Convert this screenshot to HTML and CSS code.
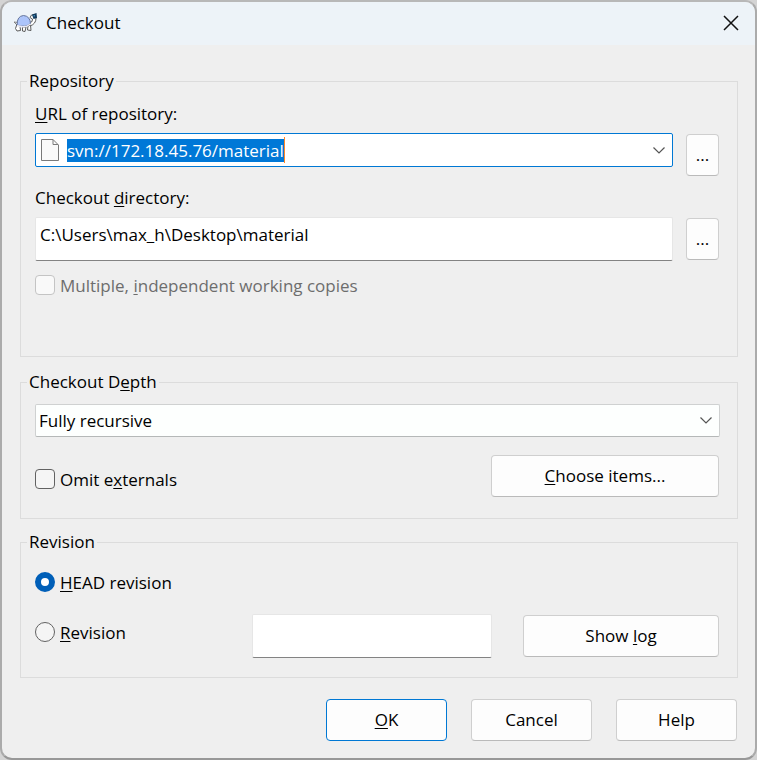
FILE: index.html
```html
<!DOCTYPE html>
<html lang="en">
<head>
<meta charset="utf-8">
<title>Checkout</title>
<link rel="stylesheet" href="styles.css">
</head>
<body>
<form class="window">
  <header class="titlebar">
    <svg class="app-icon" viewBox="0 0 24 20" aria-hidden="true">
      <path d="M1 9 L5 9.500 L4 12 Z" fill="#fff" stroke="#777" stroke-width=".9"/>
      <path d="M4 11 L2.500 15.500 L4 18 L7.500 17.500 L7 13 Z M9.500 14 L9.500 18 L12 18.500 L13 14 Z M15 13 L14.500 17 L18 17.500 L17.500 12 Z" fill="#fff" stroke="#5c5c5c"/>
      <path d="M16.500 9.500 Q20 9.500 19.500 6 L17 4.500 L18.500 2 L22.500 2 L23 5 Q23 11 17 13 Z" fill="#fff" stroke="#5c5c5c"/>
      <path d="M4 12 Q4 3 10.500 2.500 Q17 3 17.500 10.500 Q12 15 4 12 Z" fill="#acc4fa" stroke="#63749c"/>
      <path d="M4 12.500 Q12 15.500 17.500 11" fill="none" stroke="#e8e8f2" stroke-width="1.500"/>
      <path d="M19 1.500 L23.500 0 L24 5 L20.500 6 Z" fill="#123a5c"/>
      <path d="M20.500 2 h1.500 v1.500 h-1.500 Z" fill="#3b86b5"/>
    </svg>
    <h1 class="title">Checkout</h1>
    <button class="close" type="button" aria-label="Close">
      <svg viewBox="0 0 16 16" width="16" height="16"><path d="M1 1 L15 15 M15 1 L1 15" fill="none" stroke="#111" stroke-width="1.500"/></svg>
    </button>
  </header>

  <main class="content">
    <fieldset class="group group-repository">
      <legend>Repository</legend>
      <label class="field-label" for="url"><u>U</u>RL of repository:</label>
      <div class="field-row">
        <div class="combo combo-url">
          <svg class="file-icon" viewBox="0 0 18 22" width="18" height="22" aria-hidden="true">
            <path d="M.5 .5 H12 L17.500 6 V21.500 H.5 Z" fill="#fafafa" stroke="#7a7a7a"/>
            <path d="M12 .5 V5.500 H17" fill="none" stroke="#7a7a7a"/>
          </svg>
          <input class="url-input" id="url" type="text" value="svn://172.18.45.76/material" autocomplete="off" spellcheck="false">
          <button class="drop" type="button" aria-label="Show recent URLs">
            <svg viewBox="0 0 12 7" width="12" height="7"><path d="M.5 .5 L6 6 L11.500 .5" fill="none" stroke="#555" stroke-width="1.200"/></svg>
          </button>
        </div>
        <button class="btn browse" type="button" aria-label="Browse repository">...</button>
      </div>
      <label class="field-label" for="directory">Checkout <u>d</u>irectory:</label>
      <div class="field-row">
        <input class="text-input" id="directory" type="text" value="C:\Users\max_h\Desktop\material" spellcheck="false">
        <button class="btn browse" type="button" aria-label="Browse directory">...</button>
      </div>
      <label class="option option-disabled"><input type="checkbox" disabled><span>Multiple, <u>i</u>ndependent working copies</span></label>
    </fieldset>

    <fieldset class="group group-depth">
      <legend>Checkout D<u>e</u>pth</legend>
      <div class="combo">
        <select class="depth" aria-label="Checkout Depth"><option>Fully recursive</option></select>
        <svg class="select-arrow" viewBox="0 0 12 7" width="12" height="7" aria-hidden="true"><path d="M.5 .5 L6 6 L11.500 .5" fill="none" stroke="#555" stroke-width="1.200"/></svg>
      </div>
      <div class="option-row depth-row">
        <label class="option"><input type="checkbox"><span>Omit e<u>x</u>ternals</span></label>
        <button class="btn choose" type="button"><u>C</u>hoose items...</button>
      </div>
    </fieldset>

    <fieldset class="group group-revision">
      <legend>Revision</legend>
      <label class="option head"><input type="radio" name="rev" checked><span><u>H</u>EAD revision</span></label>
      <div class="option-row revision-row">
        <label class="option"><input type="radio" name="rev"><span><u>R</u>evision</span></label>
        <input class="text-input revision-input" type="text" aria-label="Revision number">
        <button class="btn log" type="button">Show <u>l</u>og</button>
      </div>
    </fieldset>

    <footer class="actions">
      <button class="btn btn-default" type="button"><u>O</u>K</button>
      <button class="btn" type="button">Cancel</button>
      <button class="btn" type="button">Help</button>
    </footer>
  </main>
</form>
<script src="script.js"></script>
</body>
</html>
```
FILE: styles.css
```css
* {
  box-sizing: border-box;
}

body {
  margin: 0;
  background: #d4d4d4;
  color: #000;
  font: 17px/24px "Open Sans", "Noto Sans", sans-serif;
}

input,
button,
select {
  margin: 0;
  color: inherit;
  font: inherit;
}

u {
  text-decoration-thickness: 1px;
  text-underline-offset: 2px;
  text-decoration-skip-ink: none;
}

.window {
  min-height: 100vh;
  border: 2px solid;
  border-color: #b8b8b8 #ababab #989898 #ababab;
  border-radius: 12px;
  background: #efefef;
  overflow: hidden;
}

.titlebar {
  display: flex;
  align-items: center;
  height: 43px;
  padding: 0 16px 2px 11px;
  background: #edf3f8;
}

.app-icon {
  width: 24px;
  height: 20px;
}

.title {
  flex: 1;
  margin: 0 0 0 9px;
  font-size: 17px;
  font-weight: 400;
}

.close {
  display: flex;
  padding: 0;
  border: 0;
  background: none;
}

.content {
  padding: 24px 17px 16px 18px;
}

.group {
  min-width: 0;
  margin: 0;
  padding: 0 17px 0 14px;
  border: 1px solid #dcdcdc;
}

.group legend {
  margin-left: -8px;
  padding: 0 2px;
}

.group-repository {
  padding-bottom: 57px;
}

.group-depth {
  margin-top: 13px;
  padding-top: 10px;
  padding-bottom: 21px;
}

.group-revision {
  margin-top: 11px;
  padding-top: 15px;
  padding-bottom: 19px;
}

.field-label {
  display: block;
  margin: 9px 0 7px;
}

.field-row {
  display: flex;
  align-items: center;
  gap: 13px;
  height: 44px;
  padding-right: 1px;
}

.combo {
  position: relative;
  display: flex;
  align-items: center;
  flex: 1;
}

.combo-url {
  align-self: flex-start;
  height: 34px;
  padding: 0 7px 0 5px;
  border: 1px solid #0078d4;
  border-radius: 2px;
  background: #fff;
}

.url-input {
  field-sizing: content;
  height: 26px;
  margin-left: 8px;
  padding: 0;
  border: 0;
  border-right: 1px solid #ff8728;
  outline: 0;
  background: #fff;
}

.url-input::selection {
  background: #0078d7;
  color: #fff;
}

.drop {
  display: flex;
  margin-left: auto;
  padding: 0;
  border: 0;
  background: none;
}

.depth {
  flex: 1;
  height: 33px;
  padding: 0 3px;
  border: 1px solid #cfd1d1;
  border-bottom-color: #b5b8b8;
  border-radius: 2px;
  background: #fdfffe;
  appearance: none;
}

.select-arrow {
  position: absolute;
  right: 8px;
  pointer-events: none;
}

.text-input {
  flex: 1;
  min-width: 0;
  height: 44px;
  padding: 0 4px 10px;
  border: 1px solid #e6e6e6;
  border-bottom-color: #838383;
  border-radius: 2px;
  background: #fff;
}

.btn {
  height: 42px;
  padding: 0;
  border: 1px solid #cfcfcf;
  border-bottom-color: #bababa;
  border-radius: 4px;
  background: #fdfdfd;
}

.browse {
  width: 33px;
}

.option {
  display: flex;
  align-items: center;
  gap: 5px;
}

.option input {
  flex: none;
  width: 20px;
  height: 20px;
  border: 1px solid #626262;
  border-radius: 4px;
  background: #f5f5f5;
  appearance: none;
}

.option input[type="radio"] {
  border-radius: 50%;
}

.option input[type="radio"]:checked {
  border: 6px solid #005fb8;
  background: #fff;
}

.option span {
  padding-top: 2px;
}

.option-disabled {
  margin-top: 11px;
  margin-bottom: 1px;
  color: #6d6d6d;
}

.option input:disabled {
  border-color: #c4c4c4;
  background: #f9f9f9;
}

.option-row {
  display: flex;
  align-items: center;
  padding-right: 1px;
}

.depth-row {
  justify-content: space-between;
  margin-top: 18px;
}

.depth-row .option {
  padding-top: 6px;
}

.choose {
  width: 228px;
}

.head {
  margin-bottom: 19px;
}

.revision-row .option {
  flex: 1;
  padding-bottom: 8px;
}

.revision-input {
  flex: none;
  width: 240px;
}

.log {
  width: 196px;
  margin-left: 31px;
}

.actions {
  display: flex;
  justify-content: flex-end;
  gap: 24px;
  margin: 21px 1px 0 0;
}

.actions .btn {
  width: 121px;
}

.actions .btn-default {
  border-color: #0078d4;
}
```
FILE: script.js
```js
const url = document.getElementById("url");
url.focus();
url.select();
```
